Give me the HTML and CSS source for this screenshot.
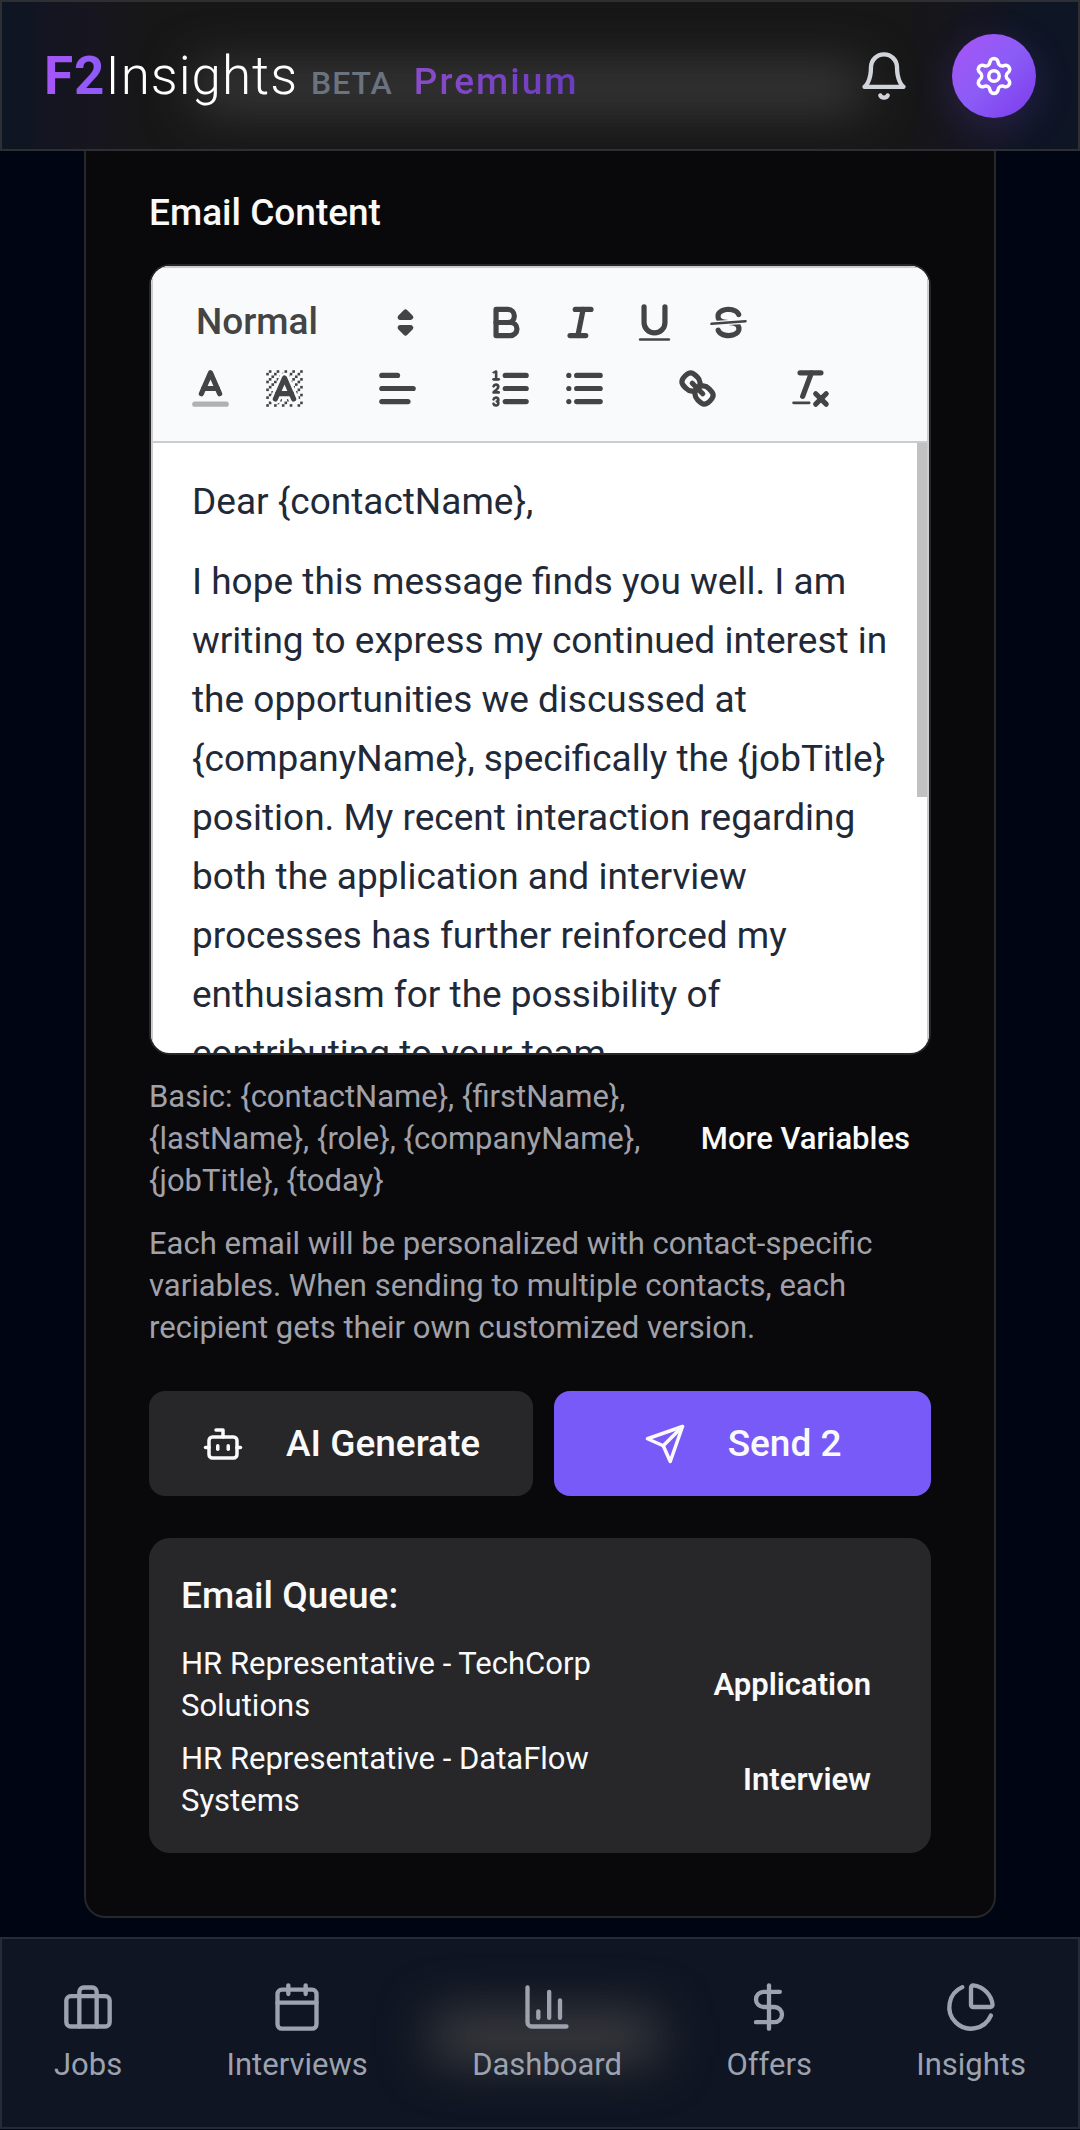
FILE: index.html
```html
<!DOCTYPE html>
<html lang="en">
<head>
    <meta charset="UTF-8">
    <meta name="viewport" content="width=device-width, initial-scale=1.0">
    <title>F2Insights</title>
    <link rel="stylesheet" href="styles.css">
</head>
<body>
    <header class="topbar">
        <a class="brand" href="#">
            <span class="brand-mark">F2</span>
            <span class="brand-name">Insights</span>
            <span class="beta">BETA</span>
            <span class="premium">Premium</span>
        </a>
        <div class="topbar-actions">
            <button type="button" class="bell-btn" aria-label="Notifications">
                <svg class="icon icon-lg" viewBox="0 0 24 24"><path d="M6 8a6 6 0 0 1 12 0c0 7 3 9 3 9H3s3-2 3-9"/><path d="M10.3 21a1.94 1.94 0 0 0 3.4 0"/></svg>
            </button>
            <button type="button" class="settings-btn" aria-label="Settings">
                <svg class="icon" viewBox="0 0 24 24"><path d="M9.671 4.136a2.34 2.34 0 0 1 4.659 0 2.34 2.34 0 0 0 3.319 1.915 2.34 2.34 0 0 1 2.33 4.033 2.34 2.34 0 0 0 0 3.831 2.34 2.34 0 0 1-2.33 4.033 2.34 2.34 0 0 0-3.319 1.915 2.34 2.34 0 0 1-4.659 0 2.34 2.34 0 0 0-3.32-1.915 2.34 2.34 0 0 1-2.33-4.033 2.34 2.34 0 0 0 0-3.831A2.34 2.34 0 0 1 6.35 6.051a2.34 2.34 0 0 0 3.319-1.915"/><circle cx="12" cy="12" r="3"/></svg>
            </button>
        </div>
    </header>

    <main class="card">
        <h2 class="field-label" id="contentLabel">Email Content</h2>

        <div class="editor">
            <div class="toolbar" role="toolbar" aria-label="Formatting">
                <div class="group picker">
                    <select aria-label="Text style">
                        <option>Normal</option>
                        <option>Heading 1</option>
                        <option>Heading 2</option>
                        <option>Heading 3</option>
                    </select>
                    <svg class="ql" viewBox="0 0 18 18"><polygon points="7 11 9 13 11 11 7 11"/><polygon points="7 7 9 5 11 7 7 7"/></svg>
                </div>
                <div class="group">
                    <button type="button" aria-label="Bold">
                        <svg class="ql" viewBox="0 0 18 18"><path d="M5,4H9.5A2.5,2.5,0,0,1,12,6.5v0A2.5,2.5,0,0,1,9.5,9H5A0,0,0,0,1,5,9V4A0,0,0,0,1,5,4Z"/><path d="M5,9h5.5A2.5,2.5,0,0,1,13,11.5v0A2.5,2.5,0,0,1,10.5,14H5a0,0,0,0,1,0,0V9A0,0,0,0,1,5,9Z"/></svg>
                    </button>
                    <button type="button" aria-label="Italic">
                        <svg class="ql" viewBox="0 0 18 18"><line x1="7" x2="13" y1="4" y2="4"/><line x1="5" x2="11" y1="14" y2="14"/><line x1="8" x2="10" y1="14" y2="4"/></svg>
                    </button>
                    <button type="button" aria-label="Underline">
                        <svg class="ql" viewBox="0 0 18 18"><path d="M5,3V9a4.012,4.012,0,0,0,4,4H9a4.012,4.012,0,0,0,4-4V3"/><rect class="fill" height="1" rx="0.5" ry="0.5" width="12" x="3" y="15"/></svg>
                    </button>
                    <button type="button" aria-label="Strikethrough">
                        <svg class="ql" viewBox="0 0 18 18"><line class="thin" x1="15.5" x2="2.5" y1="8.5" y2="9.5"/><path class="fill" d="M9.007,8C6.542,7.791,6,7.519,6,6.5,6,5.792,7.283,5,9,5c1.571,0,2.765.679,2.969,1.309a1,1,0,0,0,1.9-.617C13.356,4.106,11.354,3,9,3,6.2,3,4,4.538,4,6.5a3.2,3.2,0,0,0,.5,1.843Z"/><path class="fill" d="M8.984,10C11.457,10.208,12,10.479,12,11.5c0,0.708-1.283,1.5-3,1.5-1.571,0-2.765-.679-2.969-1.309a1,1,0,1,0-1.9.617C4.644,13.894,6.646,15,9,15c2.8,0,5-1.538,5-3.5a3.2,3.2,0,0,0-.5-1.843Z"/></svg>
                    </button>
                </div>
                <div class="group">
                    <button type="button" aria-label="Text color">
                        <svg class="ql" viewBox="0 0 18 18"><line class="faded" x1="3" x2="15" y1="15" y2="15"/><polyline points="5.5 11 9 3 12.5 11"/><line x1="11.63" x2="6.38" y1="9" y2="9"/></svg>
                    </button>
                    <button type="button" aria-label="Background color">
                        <svg class="ql" viewBox="0 0 18 18">
                            <g class="fill">
                                <polygon points="6 6.868 6 6 5 6 5 7 5.942 7 6 6.868"/><rect height="1" width="1" x="4" y="4"/><polygon points="6.817 5 6 5 6 6 6.38 6 6.817 5"/><rect height="1" width="1" x="2" y="6"/><rect height="1" width="1" x="3" y="5"/><rect height="1" width="1" x="4" y="7"/><polygon points="4 11.439 4 11 3 11 3 12 3.755 12 4 11.439"/><rect height="1" width="1" x="2" y="12"/><rect height="1" width="1" x="2" y="9"/><rect height="1" width="1" x="2" y="15"/><polygon points="4.63 10 4 10 4 11 4.192 11 4.63 10"/><rect height="1" width="1" x="3" y="8"/>
                                <path d="M10.832,4.2L11,4.582V4H10.708A1.948,1.948,0,0,1,10.832,4.2Z"/><path d="M7,4.582L7.168,4.2A1.929,1.929,0,0,1,7.292,4H7V4.582Z"/><path d="M8,13H7.683l-0.351.8a1.933,1.933,0,0,1-.124.2H8V13Z"/><rect height="1" width="1" x="12" y="2"/><rect height="1" width="1" x="11" y="3"/><path d="M9,3H8V3.282A1.985,1.985,0,0,1,9,3Z"/><rect height="1" width="1" x="2" y="3"/><rect height="1" width="1" x="6" y="2"/><rect height="1" width="1" x="3" y="2"/><rect height="1" width="1" x="5" y="3"/><rect height="1" width="1" x="9" y="2"/><rect height="1" width="1" x="15" y="14"/>
                                <polygon points="13.447 10.174 13.469 10.225 13.472 10.232 13.808 11 14 11 14 10 13.37 10 13.447 10.174"/><rect height="1" width="1" x="13" y="7"/><rect height="1" width="1" x="15" y="5"/><rect height="1" width="1" x="14" y="6"/><rect height="1" width="1" x="15" y="8"/><rect height="1" width="1" x="14" y="9"/><path d="M3.775,14H3v1H4V14.314A1.97,1.97,0,0,1,3.775,14Z"/><rect height="1" width="1" x="14" y="3"/><polygon points="12 6.868 12 6 11.62 6 12 6.868"/><rect height="1" width="1" x="15" y="2"/><rect height="1" width="1" x="12" y="5"/><rect height="1" width="1" x="13" y="4"/><polygon points="12.933 9 13 9 13 8 12.495 8 12.933 9"/>
                                <rect height="1" width="1" x="9" y="14"/><rect height="1" width="1" x="8" y="15"/><path d="M6,14.926V15H7V14.316A1.993,1.993,0,0,1,6,14.926Z"/><rect height="1" width="1" x="5" y="15"/><path d="M10.668,13.8L10.317,13H10v1h0.792A1.947,1.947,0,0,1,10.668,13.8Z"/><rect height="1" width="1" x="11" y="15"/><path d="M14.332,12.2a1.99,1.99,0,0,1,.166.8H15V12H14.245Z"/><rect height="1" width="1" x="14" y="15"/><rect height="1" width="1" x="15" y="11"/>
                            </g>
                            <polyline points="5.5 13 9 5 12.5 13"/><line x1="11.63" x2="6.38" y1="11" y2="11"/>
                        </svg>
                    </button>
                </div>
                <div class="group">
                    <button type="button" aria-label="Align">
                        <svg class="ql" viewBox="0 0 18 18"><line x1="3" x2="15" y1="9" y2="9"/><line x1="3" x2="13" y1="14" y2="14"/><line x1="3" x2="9" y1="4" y2="4"/></svg>
                    </button>
                </div>
                <div class="group">
                    <button type="button" aria-label="Numbered list">
                        <svg class="ql" viewBox="0 0 18 18"><line x1="7" x2="15" y1="4" y2="4"/><line x1="7" x2="15" y1="9" y2="9"/><line x1="7" x2="15" y1="14" y2="14"/><line class="thin" x1="2.5" x2="4.5" y1="5.5" y2="5.5"/><path class="fill" d="M3.5,6A0.5,0.5,0,0,1,3,5.5V3.085l-0.276.138A0.5,0.5,0,0,1,2.053,3c-0.124-.247-0.023-0.324.224-0.447l1-.5A0.5,0.5,0,0,1,4,2.5v3A0.5,0.5,0,0,1,3.5,6Z"/><path class="thin" d="M4.5,10.5h-2c0-.234,1.85-1.076,1.85-2.234A0.959,0.959,0,0,0,2.5,8.156"/><path class="thin" d="M2.5,14.846a0.959,0.959,0,0,0,1.85-.109A0.7,0.7,0,0,0,3.75,14a0.688,0.688,0,0,0,.6-0.736,0.959,0.959,0,0,0-1.85-.109"/></svg>
                    </button>
                    <button type="button" aria-label="Bullet list">
                        <svg class="ql" viewBox="0 0 18 18"><line x1="6" x2="15" y1="4" y2="4"/><line x1="6" x2="15" y1="9" y2="9"/><line x1="6" x2="15" y1="14" y2="14"/><line x1="3" x2="3" y1="4" y2="4"/><line x1="3" x2="3" y1="9" y2="9"/><line x1="3" x2="3" y1="14" y2="14"/></svg>
                    </button>
                </div>
                <div class="group">
                    <button type="button" aria-label="Link">
                        <svg class="ql" viewBox="0 0 18 18"><line x1="7" x2="11" y1="7" y2="11"/><path d="M8.9,4.577a3.476,3.476,0,0,1,.36,4.679A3.476,3.476,0,0,1,4.577,8.9C3.185,7.5,2.035,6.4,4.217,4.217S7.5,3.185,8.9,4.577Z"/><path d="M13.423,9.1a3.476,3.476,0,0,0-4.679-.36,3.476,3.476,0,0,0,.36,4.679c1.392,1.392,2.5,2.542,4.679.36S14.815,10.5,13.423,9.1Z"/></svg>
                    </button>
                </div>
                <div class="group">
                    <button type="button" aria-label="Clear formatting">
                        <svg class="ql" viewBox="0 0 18 18"><line x1="5" x2="13" y1="3" y2="3"/><line x1="6" x2="9.35" y1="12" y2="3"/><line x1="11" x2="15" y1="11" y2="15"/><line x1="15" x2="11" y1="11" y2="15"/><rect class="fill" height="1" rx="0.5" ry="0.5" width="7" x="2" y="14"/></svg>
                    </button>
                </div>
            </div>
            <div class="editor-body">
                <div class="editor-text" contenteditable="true" spellcheck="false" role="textbox" aria-multiline="true" aria-labelledby="contentLabel">
                    <p>Dear {contactName},</p>
                    <p>I hope this message finds you well. I am writing to express my continued interest in the opportunities we discussed at {companyName}, specifically the {jobTitle} position. My recent interaction regarding both the application and interview processes has further reinforced my enthusiasm for the possibility of contributing to your team.</p>
                </div>
                <div class="scroll-thumb"></div>
            </div>
        </div>

        <div class="variables">
            <p class="hint">Basic: {contactName}, {firstName}, {lastName}, {role}, {companyName}, {jobTitle}, {today}</p>
            <button type="button" class="more-btn">More Variables</button>
        </div>
        <p class="hint">Each email will be personalized with contact-specific variables. When sending to multiple contacts, each recipient gets their own customized version.</p>

        <div class="actions">
            <button type="button" class="btn">
                <svg class="icon" viewBox="0 0 24 24"><path d="M12 8V4H8"/><rect width="16" height="12" x="4" y="8" rx="2"/><path d="M2 14h2"/><path d="M20 14h2"/><path d="M15 13v2"/><path d="M9 13v2"/></svg>
                AI Generate
            </button>
            <button type="button" class="btn btn-primary">
                <svg class="icon" viewBox="0 0 24 24"><path d="m22 2-7 20-4-9-9-4Z"/><path d="M22 2 11 13"/></svg>
                Send 2
            </button>
        </div>

        <section class="queue">
            <h3>Email Queue:</h3>
            <ul>
                <li><span>HR Representative - TechCorp Solutions</span><span class="tag">Application</span></li>
                <li><span>HR Representative - DataFlow Systems</span><span class="tag">Interview</span></li>
            </ul>
        </section>
    </main>

    <nav class="tabbar">
        <a href="#">
            <svg class="icon icon-lg" viewBox="0 0 24 24"><rect x="2" y="7" width="20" height="14" rx="2"/><path d="M16 21V5a2 2 0 0 0-2-2h-4a2 2 0 0 0-2 2v16"/></svg>
            Jobs
        </a>
        <a href="#">
            <svg class="icon icon-lg" viewBox="0 0 24 24"><path d="M8 2v4"/><path d="M16 2v4"/><rect width="18" height="18" x="3" y="4" rx="2"/><path d="M3 10h18"/></svg>
            Interviews
        </a>
        <a href="#">
            <svg class="icon icon-lg" viewBox="0 0 24 24"><path d="M3 3v16a2 2 0 0 0 2 2h16"/><path d="M18 17V9"/><path d="M13 17V5"/><path d="M8 17v-3"/></svg>
            Dashboard
        </a>
        <a href="#">
            <svg class="icon icon-lg" viewBox="0 0 24 24"><path d="M12 2v20"/><path d="M17 5H9.5a3.5 3.5 0 0 0 0 7h5a3.5 3.5 0 0 1 0 7H6"/></svg>
            Offers
        </a>
        <a href="#">
            <svg class="icon icon-lg" viewBox="0 0 24 24"><path d="M21 12c.552 0 1.005-.449.95-.998a10 10 0 0 0-8.953-8.951c-.55-.055-.998.398-.998.95v8a1 1 0 0 0 1 1z"/><path d="M21.21 15.89A10 10 0 1 1 8 2.83"/></svg>
            Insights
        </a>
    </nav>
</body>
</html>
```
FILE: styles.css
```css
* {
    box-sizing: border-box;
}
body {
    margin: 0;
    background: #000514;
    color: #fafafa;
    font-family: Roboto, sans-serif;
    font-size: 31px;
    line-height: 42px;
}
h2, h3, p, ul {
    margin: 0;
    padding: 0;
}
ul {
    list-style: none;
}
a {
    color: inherit;
    text-decoration: none;
}
button, select {
    margin: 0;
    padding: 0;
    border: none;
    background: none;
    color: inherit;
    font: inherit;
    cursor: pointer;
}
.icon {
    width: 42px;
    height: 42px;
    flex: none;
    display: block;
    fill: none;
    stroke: currentColor;
    stroke-width: 2;
    stroke-linecap: round;
    stroke-linejoin: round;
}
.icon-lg {
    width: 52px;
    height: 52px;
}

/* header */
.topbar {
    position: relative;
    overflow: hidden;
    display: flex;
    align-items: center;
    justify-content: space-between;
    padding: 32px 42px 31px;
    border: 2px solid #2e2f32;
    background: linear-gradient(to right, #0e1524, #17151f 8%, #171718 13%, #171718 84%, #15151f 90%, #0e1524 96%);
}
.topbar::before {
    content: "";
    position: absolute;
    left: 18%;
    right: 20%;
    top: 68px;
    height: 36px;
    background: #444;
    filter: blur(26px);
}
.brand, .topbar-actions {
    position: relative;
    display: flex;
}
.brand {
    align-items: baseline;
    padding-top: 7px;
    letter-spacing: 1px;
}
.brand-mark, .brand-name {
    font-size: 53px;
}
.brand-mark {
    font-weight: 700;
    background: linear-gradient(to right, #a855f7, #8b5cf6);
    background-clip: text;
    color: transparent;
}
.brand-name {
    font-weight: 300;
    color: #fff;
}
.beta {
    margin-left: 13px;
    font-size: 32px;
    font-weight: 500;
    color: #6b7280;
}
.premium {
    margin-left: 21px;
    font-size: 37px;
    font-weight: 500;
    letter-spacing: 2px;
    background: linear-gradient(to right, #8b4cc8, #6a3cc0);
    background-clip: text;
    color: transparent;
}
.topbar-actions {
    align-items: center;
    gap: 42px;
}
.bell-btn {
    color: #d1d5db;
}
.settings-btn {
    display: flex;
    align-items: center;
    justify-content: center;
    width: 84px;
    height: 84px;
    border-radius: 50%;
    color: #fff;
    background: linear-gradient(135deg, #a855f7, #8b5cf6 50%, #7c3aed);
    box-shadow: 0 10px 40px rgba(139, 92, 246, 0.2);
}

/* main card */
.card {
    margin: 0 84px 19px;
    padding: 41px 63px 63px;
    border: 2px solid #27272a;
    border-top: none;
    border-radius: 0 0 21px 21px;
    background: #09090b;
}
.field-label, .queue h3 {
    font-size: 37px;
    font-weight: 500;
}
.field-label {
    margin-bottom: 30px;
}

/* editor */
.editor {
    overflow: hidden;
    border: 2px solid #27272a;
    border-radius: 21px;
    background: #fff;
}
.toolbar {
    display: flex;
    flex-wrap: wrap;
    column-gap: 39px;
    padding: 21px 21px 20px;
    border: 2px solid #ccc;
    background: #f9fafb;
    color: #444;
}
.group {
    display: flex;
    align-items: center;
    height: 66px;
}
.group button {
    padding: 8px 13px;
    width: 74px;
}
.picker {
    position: relative;
    width: 257px;
}
.picker select {
    appearance: none;
    width: 100%;
    padding-left: 22px;
    font-size: 37px;
    font-weight: 500;
}
.picker .ql {
    position: absolute;
    right: 2px;
    pointer-events: none;
}
.ql {
    display: block;
    width: 47px;
    height: 47px;
    fill: none;
    stroke: #444;
    stroke-width: 2;
    stroke-linecap: round;
    stroke-linejoin: round;
}
.ql .thin {
    stroke-width: 1;
}
.ql .fill {
    fill: #444;
    stroke: none;
}
.ql .faded {
    opacity: 0.4;
}
.picker polygon {
    fill: #444;
}
.editor-body {
    position: relative;
    height: 610px;
    overflow: hidden;
    border: 2px solid #ccc;
    border-width: 0 2px;
}
.editor-text {
    padding: 29px 39px;
    color: #1f2937;
    font-size: 37px;
    line-height: 59px;
    outline: none;
}
.editor-text p {
    margin-bottom: 21px;
}
.scroll-thumb {
    position: absolute;
    top: 0;
    right: 0;
    width: 10px;
    height: 58%;
    background: #c1c1c1;
}

/* helper text */
.variables {
    display: flex;
    align-items: center;
    justify-content: space-between;
    margin: 21px 0;
}
.hint {
    color: #a1a1aa;
}
.more-btn {
    flex: none;
    padding: 0 21px;
    font-weight: 500;
}

/* buttons */
.actions {
    display: flex;
    gap: 21px;
    margin: 42px 0;
}
.btn {
    flex: 1;
    display: flex;
    align-items: center;
    justify-content: center;
    gap: 42px;
    height: 105px;
    padding: 0 53px;
    border-radius: 16px;
    background: #27272a;
    font-size: 37px;
    font-weight: 500;
    white-space: nowrap;
}
.btn-primary {
    background: #785af8;
}

/* queue */
.queue {
    padding: 32px 32px 31px;
    border-radius: 21px;
    background: #27272a;
}
.queue h3 {
    line-height: 52px;
    margin-bottom: 21px;
}
.queue li {
    display: flex;
    align-items: center;
    justify-content: space-between;
    gap: 21px;
}
.queue li + li {
    margin-top: 11px;
}
.tag {
    padding: 0 28px;
    font-weight: 600;
}

/* bottom tabs */
.tabbar {
    position: relative;
    overflow: hidden;
    display: flex;
    justify-content: space-between;
    padding: 42px 52px 41px;
    border: 2px solid #272b38;
    background: #0f1522;
    color: #9ca3af;
}
.tabbar::before {
    content: "";
    position: absolute;
    left: 40%;
    right: 39%;
    top: 76px;
    height: 44px;
    background: #444;
    filter: blur(26px);
}
.tabbar a {
    position: relative;
    display: flex;
    flex-direction: column;
    align-items: center;
    gap: 11px;
}
```
